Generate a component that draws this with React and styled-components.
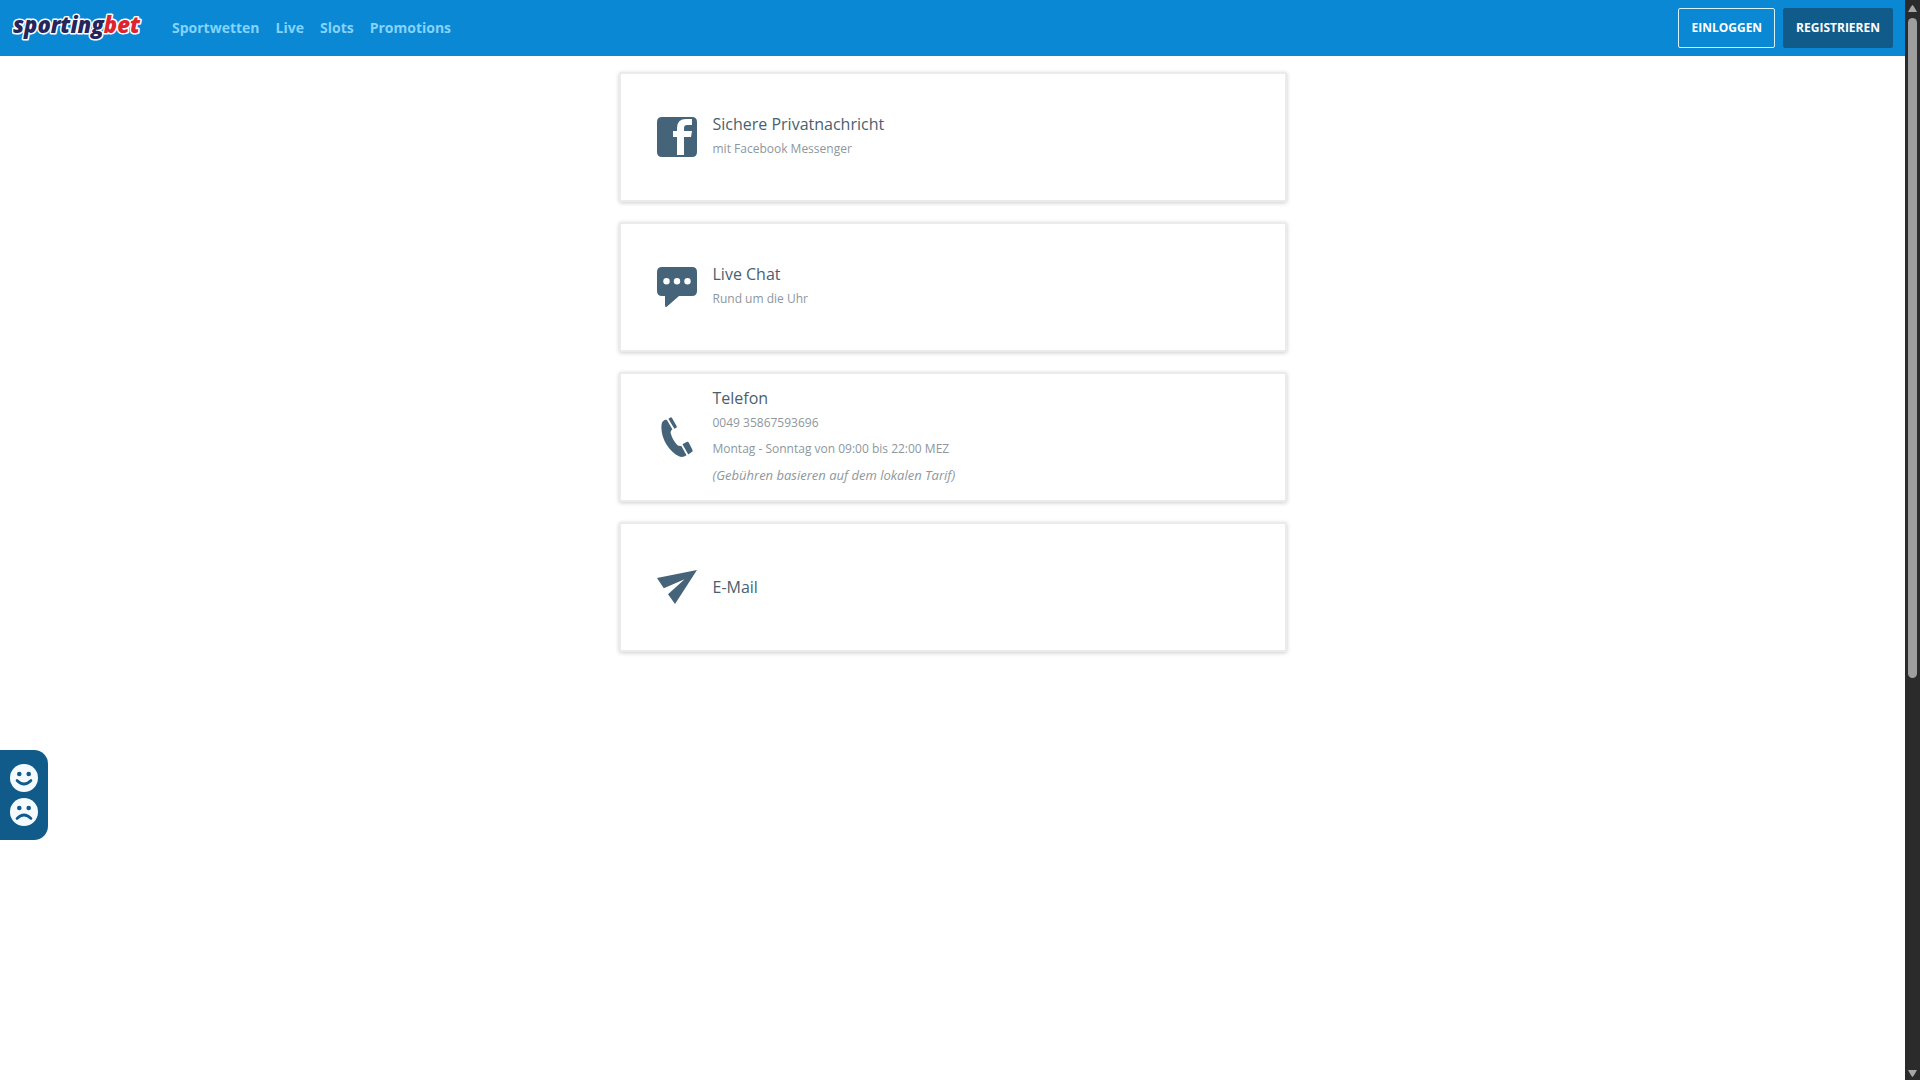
import React from 'react'
import styled, { createGlobalStyle } from 'styled-components'

const GlobalStyle = createGlobalStyle`
  * {
    box-sizing: border-box;
  }

  body {
    margin: 0;
    background: white;
    font-family: 'Open Sans', 'Noto Sans', sans-serif;
  }
`

const Page = styled.div`
  display: flex;
  min-height: 100vh;
`

const Content = styled.div`
  flex: 1;
  min-width: 0;
`

const Header = styled.header`
  display: flex;
  align-items: center;
  height: 56px;
  padding: 0 12px;
  background: #0a88d4;
`

const Logo = styled.a`
  display: flex;
  width: 136px;
  margin-right: 24px;
`

const Nav = styled.nav`
  display: flex;
  flex: 1;
  gap: 16px;
`

const NavLink = styled.a`
  color: #84d3fb;
  font-size: 14px;
  font-weight: 700;
  line-height: 20px;
  text-decoration: none;
`

const Actions = styled.div`
  display: flex;
  gap: 8px;
`

const HeaderButton = styled.button`
  height: 40px;
  padding: 0 12px 2px;
  border: 1px solid ${({ $filled }) => ($filled ? '#115b8b' : '#d5f2fd')};
  border-radius: 2px;
  background: ${({ $filled }) => ($filled ? '#115b8b' : 'transparent')};
  color: white;
  font-family: inherit;
  font-size: 12px;
  font-weight: 700;
  cursor: pointer;
`

const Cards = styled.main`
  display: flex;
  flex-direction: column;
  gap: 20px;
  width: 100%;
  max-width: 668px;
  margin: 0 auto;
  padding: 16px 0;
`

const Card = styled.a`
  display: flex;
  align-items: center;
  gap: 16px;
  min-height: 130px;
  padding: 8px 36px;
  border: 2px solid #ebebeb;
  border-radius: 2px;
  background: white;
  box-shadow: 0 1px 4px rgba(0, 0, 0, 0.2);
  color: #4a5f70;
  text-decoration: none;
`

const CardIcon = styled.svg`
  width: 40px;
  height: 40px;
  flex-shrink: 0;
  fill: #456379;
`

const Title = styled.div`
  font-size: 16px;
  line-height: 24px;
`

const Detail = styled.div`
  color: #8d979e;
  font-size: 12px;
  line-height: 26px;
`

const Note = styled(Detail)`
  font-size: 13px;
  font-style: italic;
`

const Feedback = styled.button`
  position: fixed;
  left: 0;
  top: 750px;
  display: flex;
  flex-direction: column;
  align-items: center;
  justify-content: center;
  gap: 6px;
  width: 48px;
  height: 90px;
  padding: 0;
  border: none;
  border-radius: 0 14px 14px 0;
  background: #115b8b;
  cursor: pointer;
`

const Scrollbar = styled.div`
  position: sticky;
  top: 0;
  display: flex;
  flex-direction: column;
  align-items: center;
  justify-content: space-between;
  width: 15px;
  height: 100vh;
  padding: 5px 0 3px;
  background: #2b2b2b;
`

const Track = styled.div`
  flex: 1;
  width: 9px;
  margin: 5px 0 3px;
`

const Thumb = styled.div`
  height: 63%;
  border-radius: 5px;
  background: #9e9e9e;
`

const Arrow = styled.svg`
  width: 9px;
  height: 8px;
  fill: #a6a6a6;
`

const BrandLogo = () => (
  <Logo href="#" aria-label="sportingbet">
    <svg width="136" height="40" viewBox="0 0 136 40">
      <text
        x="1"
        y="25"
        fontFamily="'Open Sans', sans-serif"
        fontSize="22"
        fontStyle="italic"
        fontWeight="800"
        stroke="white"
        strokeWidth="3"
        strokeLinejoin="round"
        paintOrder="stroke"
      >
        <tspan fill="#26265c">sporting</tspan>
        <tspan fill="#e0242f">bet</tspan>
      </text>
    </svg>
  </Logo>
)

const FacebookIcon = () => (
  <CardIcon viewBox="0 0 40 40">
    <path d="M5 0H35Q40 0 40 5V35Q40 40 35 40H27V20H34L35 14H27V11Q27 8 30 8H35V2H29Q20 2 20 11V14H16V20H20V38H27V40H5Q0 40 0 35V5Q0 0 5 0Z" />
  </CardIcon>
)

const ChatIcon = () => (
  <CardIcon viewBox="0 0 40 40">
    <path d="M5 0H35Q40 0 40 5V24Q40 29 35 29H22L10 39.5Q8 41 8 38V29H5Q0 29 0 24V5Q0 0 5 0Z" />
    <g fill="white">
      <circle cx="9.5" cy="14.2" r="3.2" />
      <circle cx="20" cy="14.2" r="3.2" />
      <circle cx="30.5" cy="14.2" r="3.2" />
    </g>
  </CardIcon>
)

const PhoneIcon = () => (
  <CardIcon viewBox="0 0 40 40">
    <path d="M6 4.2Q8 2.5 9.8 2.8L15.3 12.2Q13.2 13.8 13.7 16.3Q15.5 23 20.5 28.3Q22.5 29.4 24.2 28.8L29.5 38.3Q26 40.8 22.5 39.6C11 34 3 19.5 4.6 7.5Q4.8 5.2 6 4.2Z" />
    <path d="M11.8 1.5L13.4.5Q14.4 0 15 1L19.7 9.3Q20.2 10.3 19.2 10.8L17.4 11.8L11.5 2Z" />
    <path d="M25.9 27L30 24.8Q31 24.4 31.6 25.3L35.6 33.2Q36 34.2 35.1 34.8L31.3 37.5L25.6 27.5Z" />
  </CardIcon>
)

const MailIcon = () => (
  <CardIcon viewBox="0 0 40 40">
    <path d="M0 11L40 3L18 37L11 27.3L27.6 12.2L6.8 21.3Z" />
  </CardIcon>
)

const Smiley = ({ sad }) => (
  <svg width="28" height="28" viewBox="0 0 28 28">
    <circle cx="14" cy="14" r="14" fill="#f4fbff" />
    <circle cx="9.3" cy="10" r="2.3" fill="#115b8b" />
    <circle cx="18.7" cy="10" r="2.3" fill="#115b8b" />
    <path
      d={sad ? 'M7 20.5Q14 13.5 21 20.5' : 'M7 16.5Q14 23.5 21 16.5'}
      fill="none"
      stroke="#115b8b"
      strokeWidth="2.6"
      strokeLinecap="round"
    />
  </svg>
)

const links = ['Sportwetten', 'Live', 'Slots', 'Promotions']

const contacts = [
  {
    title: 'Sichere Privatnachricht',
    icon: FacebookIcon,
    details: ['mit Facebook Messenger']
  },
  { title: 'Live Chat', icon: ChatIcon, details: ['Rund um die Uhr'] },
  {
    title: 'Telefon',
    icon: PhoneIcon,
    details: ['0049 35867593696', 'Montag - Sonntag von 09:00 bis 22:00 MEZ'],
    note: '(Gebühren basieren auf dem lokalen Tarif)'
  },
  { title: 'E-Mail', icon: MailIcon, details: [] }
]

const ContactCard = ({ contact }) => {
  const Icon = contact.icon
  return (
    <Card href="#">
      <Icon />
      <div>
        <Title>{contact.title}</Title>
        {contact.details.map(detail => (
          <Detail key={detail}>{detail}</Detail>
        ))}
        {contact.note && <Note>{contact.note}</Note>}
      </div>
    </Card>
  )
}

const App = () => (
  <Page>
    <GlobalStyle />
    <Content>
      <Header>
        <BrandLogo />
        <Nav>
          {links.map(link => (
            <NavLink key={link} href="#">
              {link}
            </NavLink>
          ))}
        </Nav>
        <Actions>
          <HeaderButton>EINLOGGEN</HeaderButton>
          <HeaderButton $filled>REGISTRIEREN</HeaderButton>
        </Actions>
      </Header>
      <Cards>
        {contacts.map(contact => (
          <ContactCard key={contact.title} contact={contact} />
        ))}
      </Cards>
    </Content>
    <Feedback aria-label="Feedback">
      <Smiley />
      <Smiley sad />
    </Feedback>
    <Scrollbar aria-hidden="true">
      <Arrow viewBox="0 0 9 8">
        <path d="M4.5 0Q5.2 0 9 7H0Q3.8 0 4.5 0Z" />
      </Arrow>
      <Track>
        <Thumb />
      </Track>
      <Arrow viewBox="0 0 9 8">
        <path d="M4.5 8Q5.2 8 9 1H0Q3.8 8 4.5 8Z" />
      </Arrow>
    </Scrollbar>
  </Page>
)

export default App
